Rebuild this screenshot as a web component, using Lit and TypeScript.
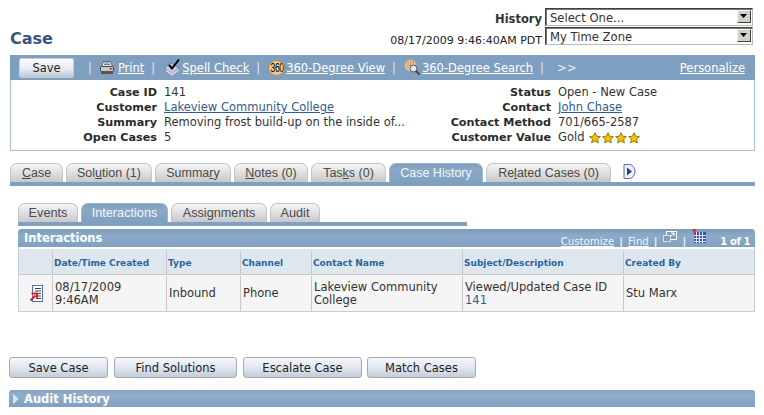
import { LitElement, html, css, svg } from "lit";
import { customElement } from "lit/decorators.js";

const star = svg`<svg class="star" width="12" height="12" viewBox="0 0 12 12"><path d="M6 .7 7.600 4.200 11.400 4.600 8.600 7.100 9.400 10.900 6 9 2.600 10.900 3.400 7.100.6 4.600 4.400 4.200Z" fill="#f2c200" stroke="#8a6d10" stroke-width=".9"/></svg>`;
const caret = svg`<svg width="8" height="5" viewBox="0 0 8 5"><path d="M0 0h7L3.500 4Z" fill="#000"/></svg>`;

@customElement("app-root")
export class AppRoot extends LitElement {
  static styles = css`
    :host { display: block; width: 764px; height: 415px; background: #fff; overflow: hidden; font-family: "DejaVu Sans", Verdana, sans-serif; font-size: 11px; color: #333; }
    a { color: inherit; text-decoration: underline; }
    .top { display: grid; grid-template-columns: 1fr auto 208px; grid-template-rows: 19px 19px; column-gap: 3px; padding: 8px 11px 0 10px; height: 46px; box-sizing: border-box; }
    .title { grid-row: 1 / 3; align-self: end; font-size: 16px; font-weight: bold; color: #36567f; line-height: 20px; margin-bottom: -3px; }
    .hist { font-weight: bold; font-size: 11.5px; text-align: right; color: #333; line-height: 18px; padding-top: 2px; box-sizing: border-box; }
    .stamp { font-size: 11px; text-align: right; line-height: 18px; padding-top: 5px; box-sizing: border-box; color: #222; }
    .sel { height: 18px; box-sizing: border-box; border: 1px solid; border-color: #404040 #b8b8b8 #b8b8b8 #404040; box-shadow: inset 1px 1px 0 #777; background: #fff; display: flex; justify-content: space-between; padding: 2px 1px 0 4px; line-height: 14px; color: #333; font-size: 11.6px; }
    .arrow { width: 14px; height: 13px; background: #d4d0c8; border: 1px solid; border-color: #f4f4f4 #404040 #404040 #f4f4f4; box-sizing: border-box; display: flex; align-items: center; justify-content: center; margin-top: -1px; }
    .bar { margin: 9px 9px 0 10px; height: 25px; background: #7f9fc0; display: flex; align-items: center; color: #fff; font-size: 11.5px; box-sizing: border-box; padding-left: 9px; }
    .save { width: 55px; height: 20px; box-sizing: border-box; border: 1px solid #c4cfdc; border-radius: 2px; background: linear-gradient(#fbfcfd, #e8edf3 55%, #bcc8d6); color: #222; font-size: 11.5px; display: flex; align-items: center; justify-content: center; margin-right: 7px; }
    .sep { margin: 0 8px 0 7px; color: #dfe8f2; }
    .bar svg { margin-right: 1px; flex: none; }
    .bar .more { margin-left: 5px; letter-spacing: .5px; color: #e8eef5; }
    .bar .pers { margin-left: auto; margin-right: 10px; font-size: 11.5px; }
    .badge { width: 17px; height: 16px; border-radius: 50%; border: 1px solid #b88c5f; background: radial-gradient(#f9d9a8, #eab676); box-sizing: border-box; color: #000; font-size: 12px; letter-spacing: -.6px; display: flex; align-items: center; justify-content: center; margin-right: 1px; font-family: "Liberation Sans", sans-serif; flex: none; overflow: hidden; }
    .badge span { transform: scaleX(.72); }
    .info { margin: 0 9px 0 10px; height: 71px; box-sizing: border-box; border: 1px solid #a2c0dc; border-top: none; display: grid; grid-template-columns: 146px 278px 102px 1fr; grid-auto-rows: 15px; column-gap: 7px; padding-top: 5px; font-size: 11.5px; line-height: 15px; color: #333; align-content: start; }
    .info b { text-align: right; color: #2b2b2b; white-space: nowrap; font-size: 11.2px; }
    .info a { color: #2e5c93; }
    .info .v { white-space: nowrap; display: flex; align-items: center; }
    .info .v .gold { margin-right: 5px; }
    .star { margin-right: .7px; }
    .tabs { display: flex; gap: 3px; align-items: flex-end; margin: 12px 9px 0 10px; height: 19px; font-family: "Liberation Sans", Arial, sans-serif; font-size: 12.5px; }
    .tab { box-sizing: border-box; height: 100%; border: 1px solid #c3c6c9; border-bottom: none; border-radius: 7px 7px 0 0; background: linear-gradient(#f6f6f6, #dcdcdc 55%, #c6c8ca); color: #4a4a4a; display: flex; align-items: center; justify-content: center; padding-bottom: 1px; }
    .tab.on { background: linear-gradient(#7e9dbd, #88a8c6 30%, #7fa0c0); border-color: #9db4ca; color: #f2f6fa; }
    .line { height: 4px; background: #7fa0c0; margin: 0 9px 0 10px; }
    .tabs.sub { margin: 17px 0 0 18px; font-size: 12.7px; }
    .line.sub { margin: 0 0 0 18px; width: 449px; }
    .nx { margin-left: 9px; margin-bottom: 3px; }
    .grid { margin: 3px 9px 0 18px; border: 1px solid #c4ced8; border-top: none; border-radius: 4px 4px 0 0; border-bottom: 1px solid #c6d0da; }
    .ghead { height: 18px; margin: 0 -1px; background: linear-gradient(#7b9bbb, #8cabc9 40%, #7fa0c0); border-radius: 4px 4px 0 0; display: flex; align-items: center; color: #fff; font-weight: bold; font-size: 11.5px; padding: 0 5px 0 6px; box-sizing: border-box; }
    .ghead .nav { margin-left: auto; display: flex; align-items: center; font-weight: normal; font-size: 10.2px; position: relative; top: 1px; }
    .ghead .nav a { color: #f2f6fa; position: relative; top: 2px; }
    .ghead .nav i { font-style: normal; margin: 0 5px; font-weight: bold; position: relative; top: 2px; color: #f2f6fa; }
    .ghead .nav .cnt { font-weight: bold; font-size: 10px; letter-spacing: -.4px; margin-left: 14px; position: relative; top: 2px; }
    .ghead .nav svg { position: relative; top: -3px; }
    .row { display: grid; grid-template-columns: 33px 114px 74px 71px 151px 161px 1fr; }
    .row > div { box-sizing: border-box; border-left: 1px solid #c8c8c8; padding-left: 1px; display: flex; align-items: center; }
    .row > div:first-child { border-left: none; }
    .hrow { margin-top: 2px; height: 26px; background: #dee6ee; border-bottom: 1px solid #c8c8c8; box-sizing: border-box; color: #2b64a0; font-size: 9px; font-weight: bold; padding-top: 2px; }
    .drow { height: 36px; background: #f5f5f5; line-height: 13px; font-size: 11.5px; color: #333; padding-top: 1px; box-sizing: border-box; }
    .drow > div { padding-left: 2px; }
    .drow > div:first-child { padding-left: 11px; }
    .drow a { color: #2e5c93; text-decoration: none; }
    .btns { display: flex; margin: 45px 0 0 9px; }
    .btn { height: 21px; box-sizing: border-box; border: 1px solid #a9a9ad; border-radius: 3px; background: linear-gradient(#f6f8fb, #dee5ee 55%, #c3ccd8); color: #222; font-size: 11.5px; display: flex; align-items: center; justify-content: center; }
    .audit { margin: 12px 9px 0 9px; height: 17px; background: linear-gradient(#84a3c1, #90aecb 30%, #7fa0c0); border-radius: 3px 3px 0 0; color: #fff; font-weight: bold; font-size: 11.5px; display: flex; align-items: center; padding: 1px 0 0 4px; box-sizing: border-box; gap: 5px; }
  `;

  tab(label: unknown, w: number, on = false) {
    return html`<div class="tab ${on ? "on" : ""}" style="width:${w}px">${label}</div>`;
  }

  render() {
    return html`
      <div class="top">
        <div class="title">Case</div>
        <div class="hist">History</div>
        <div class="sel"><span>Select One...</span><span class="arrow">${caret}</span></div>
        <div class="stamp">08/17/2009 9:46:40AM PDT</div>
        <div class="sel"><span>My Time Zone</span><span class="arrow">${caret}</span></div>
      </div>
      <div class="bar">
        <div class="save">Save</div>
        <span class="sep">|</span>
        <svg width="17" height="16" viewBox="0 0 17 16"><path d="M3.500 1.500h7l2 5h-11Z" fill="#e6e6f2" stroke="#555" stroke-width=".8"/><path d="M4.500 3h5M4 4.500h6" stroke="#6a7ab0"/><rect x=".5" y="6.500" width="13" height="5" rx="1" fill="#c9c9c9" stroke="#444"/><rect x="1" y="11" width="12" height="3" fill="#555"/><rect x="9.500" y="8" width="3" height="1.500" fill="#d33"/></svg>
        <a>Print</a>
        <span class="sep">|</span>
        <svg width="18" height="17" viewBox="0 0 18 17"><path d="M1 9 8 4l8 5-7 6Z" fill="#b9c9e6" stroke="#6b7fa8"/><path d="M3 11.500 9 15.500l7-5" fill="none" stroke="#f3d9d9" stroke-width="1.500"/><path d="M6 6l3 3.500 7-9" fill="none" stroke="#000" stroke-width="2"/></svg>
        <a>Spell Check</a>
        <span class="sep">|</span>
        <span class="badge"><span>360</span></span>
        <a>360-Degree View</a>
        <span class="sep">|</span>
        <svg width="17" height="17" viewBox="0 0 17 17"><circle cx="6.500" cy="6.500" r="5.500" fill="#eec69a" stroke="#d8b48c"/><path d="M4 3v6M6.500 2v6M9 2v3" stroke="#c98a58"/><circle cx="9.500" cy="9.500" r="3.500" fill="#dfeaf5" stroke="#556"/><path d="M12 12l3.500 3.500" stroke="#444" stroke-width="2"/></svg>
        <a>360-Degree Search</a>
        <span class="sep">|</span>
        <span class="more">&gt;&gt;</span>
        <a class="pers">Personalize</a>
      </div>
      <div class="info">
        <b>Case ID</b><span class="v">141</span><b>Status</b><span class="v">Open - New Case</span>
        <b>Customer</b><span class="v"><a>Lakeview Community College</a></span><b>Contact</b><span class="v"><a>John Chase</a></span>
        <b>Summary</b><span class="v">Removing frost build-up on the inside of...</span><b>Contact Method</b><span class="v">701/665-2587</span>
        <b>Open Cases</b><span class="v">5</span><b>Customer Value</b><span class="v"><span class="gold">Gold</span>${star}${star}${star}${star}</span>
      </div>
      <div class="tabs">
        ${this.tab(html`<u>C</u>ase`, 53)}
        ${this.tab(html`Sol<u>u</u>tion (1)`, 86)}
        ${this.tab(html`Summa<u>r</u>y`, 76)}
        ${this.tab(html`<u>N</u>otes (0)`, 74)}
        ${this.tab(html`Tas<u>k</u>s (0)`, 75)}
        ${this.tab("Case History", 94, true)}
        ${this.tab(html`Re<u>l</u>ated Cases (0)`, 125)}
        <svg class="nx" width="13" height="15" viewBox="0 0 13 15"><path d="M1 .5h5a6 7 0 0 1 0 14H1Z" fill="#eef2f8" stroke="#5c6f9c"/><path d="M4 3.500 9 7.500 4 11.500Z" fill="#27408f"/></svg>
      </div>
      <div class="line"></div>
      <div class="tabs sub">
        ${this.tab("Events", 60)}
        ${this.tab("Interactions", 87, true)}
        ${this.tab("Assignments", 96)}
        ${this.tab("Audit", 50)}
      </div>
      <div class="line sub"></div>
      <div class="grid">
        <div class="ghead"><span>Interactions</span>
          <div class="nav"><a>Customize</a><i>|</i><a>Find</a><i>|</i>
            <svg width="14" height="13" viewBox="0 0 14 13"><rect x="3.500" y="1.500" width="10" height="8" fill="#7f9fc0" stroke="#fff"/><rect x=".5" y="5.500" width="7" height="6" fill="#7f9fc0" stroke="#dde"/><path d="M7 7l4-4M8 3h3v3" stroke="#fff" fill="none"/></svg>
            <i style="margin:0 6px">|</i>
            <svg width="14" height="15" viewBox="0 0 14 15"><rect x="2" y="3" width="12" height="11" fill="#3f4fb0"/><path d="M4.500 3v11M7.500 3v11M10.500 3v11M2 6.500h12M2 9.500h12M2 12.500h12" stroke="#dfe4f5"/><path d="M0 0h5L2 5Z" fill="#e0322a"/></svg>
            <span class="cnt">1 of 1</span></div></div>
        <div class="row hrow"><div></div><div>Date/Time Created</div><div>Type</div><div>Channel</div><div>Contact Name</div><div>Subject/Description</div><div>Created By</div></div>
        <div class="row drow">
          <div><svg width="14" height="17" viewBox="0 0 14 17"><rect x="2.500" y=".5" width="10" height="16" fill="#fff" stroke="#5570b8"/><path d="M5 3.500h6M5 6h6M7.500 8.500h3.500M7.500 11h3.500M7.500 13.500h3.500" stroke="#444"/><path d="M.5 15.500 5.500 10.500M1.500 8.500h5.500v5.500" stroke="#d8261c" stroke-width="2" fill="none"/></svg></div>
          <div>08/17/2009<br>9:46AM</div><div>Inbound</div><div>Phone</div><div>Lakeview Community<br>College</div><div><span>Viewed/Updated Case ID<br><a>141</a></span></div><div>Stu Marx</div>
        </div>
      </div>
      <div class="btns">
        <div class="btn" style="width:99px">Save Case</div>
        <div class="btn" style="width:123px;margin-left:6px">Find Solutions</div>
        <div class="btn" style="width:119px;margin-left:6px">Escalate Case</div>
        <div class="btn" style="width:109px;margin-left:5px">Match Cases</div>
      </div>
      <div class="audit"><svg width="6" height="10" viewBox="0 0 6 10"><path d="M.5.5 5 5 .5 9.500Z" fill="#dbe6f0" stroke="#f4f8fb" stroke-width=".5"/></svg><span>Audit History</span></div>
    `;
  }
}
